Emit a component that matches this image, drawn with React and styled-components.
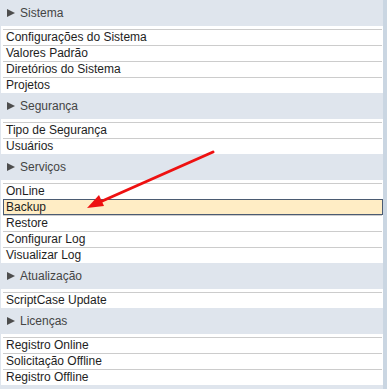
import React from 'react';
import styled, { createGlobalStyle } from 'styled-components';

const sections = [
  { title: 'Sistema', items: ['Configurações do Sistema', 'Valores Padrão', 'Diretórios do Sistema', 'Projetos'] },
  { title: 'Segurança', items: ['Tipo de Segurança', 'Usuários'] },
  { title: 'Serviços', items: ['OnLine', 'Backup', 'Restore', 'Configurar Log', 'Visualizar Log'] },
  { title: 'Atualização', items: ['ScriptCase Update'] },
  { title: 'Licenças', items: ['Registro Online', 'Solicitação Offline', 'Registro Offline'] },
];

const GlobalStyle = createGlobalStyle`
  html, body {
    margin: 0;
    padding: 0;
    background: #dfe5ed;
  }
  body {
    font-family: "Liberation Sans", Arial, sans-serif;
  }
`;

const Page = styled.div`
  position: relative;
  display: flex;
  width: 387px;
  height: 389px;
  overflow: hidden;
  background: #dfe5ed;
`;

const Panel = styled.div`
  flex: 1;
  display: flex;
  flex-direction: column;
`;

const Strip = styled.div`
  width: 4px;
  background: #cad6e2;
`;

const Header = styled.div`
  height: 26px;
  display: flex;
  align-items: center;
  gap: 4px;
  padding-left: 7px;
  font-size: 12px;
  color: #444;
`;

const Triangle = styled.span`
  width: 0;
  height: 0;
  border-top: 4px solid transparent;
  border-bottom: 4px solid transparent;
  border-left: 8px solid #4d4d4d;
  margin-right: 1px;
`;

const List = styled.ul`
  list-style: none;
  margin: 0 0 0 1px;
  padding: 3px 1px 0 2px;
  background: #fff;
`;

const Item = styled.li`
  height: 15px;
  line-height: 15px;
  padding-left: 3px;
  font-size: 12px;
  color: #1e1e1e;
  border-top: 1px solid #cccccc;
  white-space: nowrap;
  ${({ $active }) =>
    $active &&
    `
    background: #ffedc5;
    border: 1px solid #4b5b72;
    height: 14px;
    line-height: 14px;
    padding-left: 2px;
    margin-right: -1px;
  `}
`;

const Arrow = styled.svg`
  position: absolute;
  left: 0;
  top: 0;
  pointer-events: none;
`;

export default function App() {
  return (
    <>
      <GlobalStyle />
      <Page>
        <Panel>
          {sections.map(s => (
            <section key={s.title}>
              <Header>
                <Triangle />
                {s.title}
              </Header>
              <List>
                {s.items.map(it => (
                  <Item key={it} $active={it === 'Backup'}>
                    {it}
                  </Item>
                ))}
              </List>
            </section>
          ))}
        </Panel>
        <Strip />
        <Arrow width="387" height="389">
          <line x1="213" y1="152" x2="100" y2="202" stroke="#ee1111" strokeWidth="3" strokeLinecap="round" />
          <polygon points="87,208 99,195 104,206" fill="#ee1111" />
        </Arrow>
      </Page>
    </>
  );
}
